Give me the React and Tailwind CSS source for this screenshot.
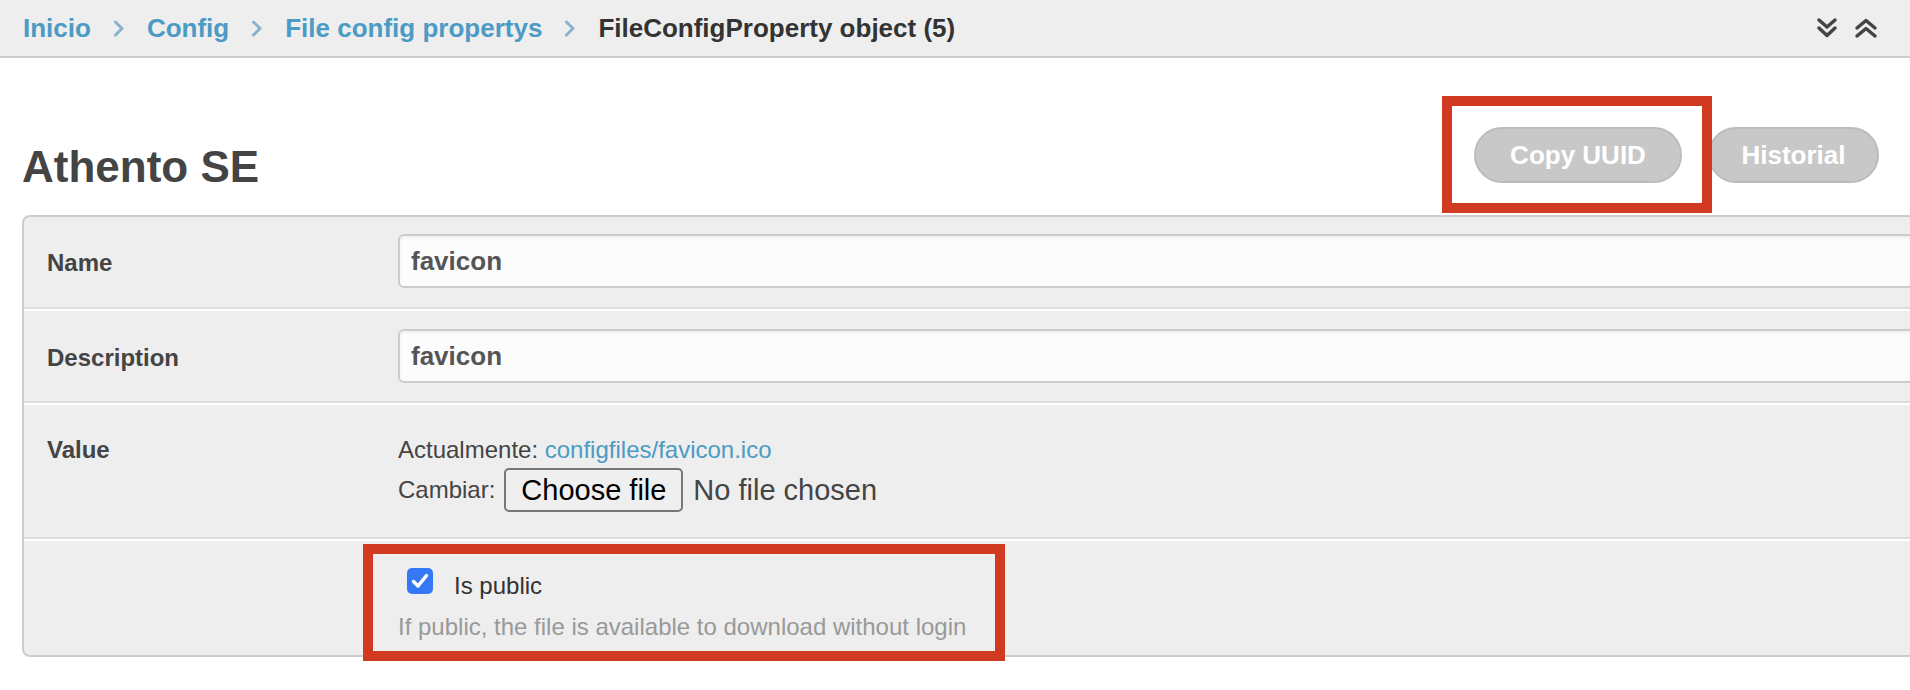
const Crumb = ({ children }) => (
  <a className="text-[#4b9bc4] font-bold">{children}</a>
);

const CrumbSep = () => (
  <svg className="mx-[22px] shrink-0" width="12" height="17" viewBox="0 0 12 17" fill="none">
    <path d="M2.5 2 L9 8.5 L2.5 15" stroke="#86b3cd" strokeWidth="3" strokeLinecap="round" strokeLinejoin="round" />
  </svg>
);

const DoubleDown = () => (
  <svg width="22" height="22" viewBox="0 0 22 22" fill="none">
    <path d="M3 3 L11 10 L19 3" stroke="#444" strokeWidth="3.5" strokeLinecap="round" strokeLinejoin="round" />
    <path d="M3 11 L11 18.5 L19 11" stroke="#444" strokeWidth="3.5" strokeLinecap="round" strokeLinejoin="round" />
  </svg>
);

const DoubleUp = () => (
  <svg width="24" height="22" viewBox="0 0 24 22" fill="none">
    <path d="M3 11 L12 3.5 L21 11" stroke="#444" strokeWidth="3.5" strokeLinecap="round" strokeLinejoin="round" />
    <path d="M3 19 L12 11.5 L21 19" stroke="#444" strokeWidth="3.5" strokeLinecap="round" strokeLinejoin="round" />
  </svg>
);

const PillButton = ({ children, width }) => (
  <button
    className={`h-[56px] ${width} rounded-full bg-[#c8c8c8] border-2 border-[#bcbcbc] text-white text-[26px] font-bold flex items-center justify-center`}
  >
    {children}
  </button>
);

const TextInput = ({ value }) => (
  <div className="flex-1 h-[54px] flex items-center px-[11px] bg-[#fcfcfc] border-2 border-[#cccccc] rounded-[6px] shadow-[inset_0_2px_3px_rgba(0,0,0,0.05)] text-[26px] font-bold text-[#555]">
    {value}
  </div>
);

export default function App() {
  return (
    <div className="relative w-full h-[690px] overflow-hidden bg-white text-[#444]" style={{ fontFamily: '"Liberation Sans", Arial, sans-serif' }}>
      {/* breadcrumbs */}
      <div className="h-[58px] bg-[#eeeeee] border-b-2 border-[#cccccc] flex items-center justify-between pl-[23px] pr-[32px]">
        <div className="flex items-center text-[26px]">
          <Crumb>Inicio</Crumb>
          <CrumbSep />
          <Crumb>Config</Crumb>
          <CrumbSep />
          <Crumb>File config propertys</Crumb>
          <CrumbSep />
          <span className="font-bold text-[#333]">FileConfigProperty object (5)</span>
        </div>
        <div className="flex items-center gap-[16px]">
          <DoubleDown />
          <DoubleUp />
        </div>
      </div>

      {/* header */}
      <div className="mt-[69px] flex items-start justify-between pl-[22px] pr-[31px]">
        <h1 className="mt-[18px] text-[44px] leading-[44px] font-bold text-[#444]">Athento SE</h1>
        <div className="flex gap-[26px]">
          <PillButton width="w-[208px]">Copy UUID</PillButton>
          <PillButton width="w-[171px]">Historial</PillButton>
        </div>
      </div>

      {/* form */}
      <div className="mt-[26px] ml-[22px] w-[1900px] bg-[#eeeeee] border-2 border-r-0 border-[#cccccc] rounded-l-[8px]">
        <div className="flex items-start pl-[23px] pt-[17px] pb-[19px] border-b-2 border-[#dddddd]">
          <div className="w-[351px] h-[54px] shrink-0 pt-[3px] text-[24px] leading-[52px] font-bold text-[#444]">Name</div>
          <TextInput value="favicon" />
        </div>
        <div className="flex items-start pl-[23px] pt-[18px] pb-[18px] border-t-2 border-white border-b-2 border-b-[#dddddd]">
          <div className="w-[351px] h-[54px] shrink-0 pt-[3px] text-[24px] leading-[52px] font-bold text-[#444]">Description</div>
          <TextInput value="favicon" />
        </div>
        <div className="flex items-start pl-[23px] pt-[30px] pb-[25px] border-t-2 border-white border-b-2 border-b-[#dddddd]">
          <div className="w-[351px] shrink-0 text-[24px] leading-[30px] font-bold text-[#444]">Value</div>
          <div className="text-[24px] leading-[30px] text-[#444]">
            <div>
              Actualmente: <a className="text-[#4b9bc4]">configfiles/favicon.ico</a>
            </div>
            <div className="mt-[3px] h-[44px] flex items-center">
              <span>Cambiar:</span>
              <span className="ml-[9px] w-[179px] h-[44px] flex items-center justify-center bg-[#efefef] border-2 border-[#767676] rounded-[5px] text-[29px] text-black">
                Choose file
              </span>
              <span className="ml-[10px] text-[29px] text-[#444]">No file chosen</span>
            </div>
          </div>
        </div>
        <div className="flex items-start pl-[23px] pt-[27px] pb-[13px] border-t-2 border-white">
          <div className="w-[351px] shrink-0" />
          <div>
            <div className="flex items-start">
              <span className="ml-[9px] w-[26px] h-[26px] rounded-[5px] bg-[#3478f6] flex items-center justify-center">
                <svg width="26" height="26" viewBox="0 0 26 26" fill="none">
                  <path d="M6.5 13.5 L11 18 L19.5 7.5" stroke="white" strokeWidth="3.5" strokeLinecap="round" strokeLinejoin="round" />
                </svg>
              </span>
              <span className="ml-[21px] mt-[3px] text-[24px] leading-[30px] text-[#333]">Is public</span>
            </div>
            <div className="mt-[11px] text-[24px] leading-[30px] text-[#999]">
              If public, the file is available to download without login
            </div>
          </div>
        </div>
      </div>

      {/* annotation boxes */}
      <div className="absolute left-[1442px] top-[96px] w-[270px] h-[117px] border-[10px] border-[#d13a21]" />
      <div className="absolute left-[363px] top-[544px] w-[642px] h-[117px] border-[10px] border-[#d13a21]" />
    </div>
  );
}
